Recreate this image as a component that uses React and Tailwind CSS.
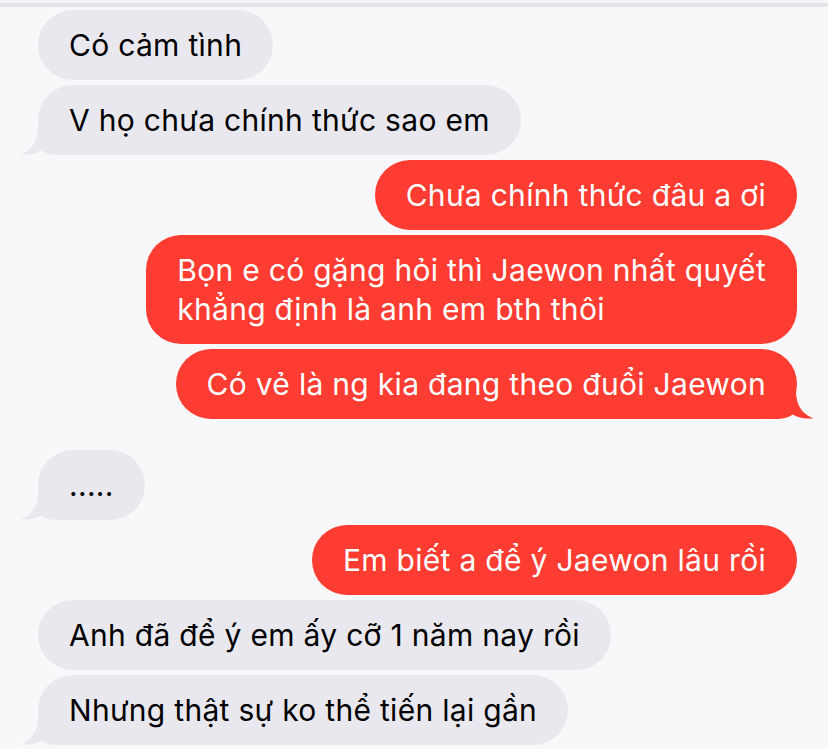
const messages = [
  { id: 1, from: "them", text: "Có cảm tình" },
  { id: 2, from: "them", text: "V họ chưa chính thức sao em", tail: true },
  { id: 3, from: "me", text: "Chưa chính thức đâu a ơi" },
  {
    id: 4,
    from: "me",
    lines: ["Bọn e có gặng hỏi thì Jaewon nhất quyết", "khẳng định là anh em bth thôi"],
  },
  { id: 5, from: "me", text: "Có vẻ là ng kia đang theo đuổi Jaewon", tail: true, gapAfter: true },
  { id: 6, from: "them", text: ".....", tail: true },
  { id: 7, from: "me", text: "Em biết a để ý Jaewon lâu rồi" },
  { id: 8, from: "them", text: "Anh đã để ý em ấy cỡ 1 năm nay rồi" },
  { id: 9, from: "them", text: "Nhưng thật sự ko thể tiến lại gần", tail: true },
];

function Tail({ mine }) {
  return (
    <svg
      width="50"
      height="36"
      viewBox="0 0 50 36"
      className={
        mine
          ? "absolute bottom-0 -right-[17px] -scale-x-100"
          : "absolute bottom-0 -left-[18px]"
      }
    >
      <path
        d="M18 0 L50 0 L50 36 L36 36 C29 35.5 25 34 21.5 31.5 C15 35 8 36 0.5 35.5 C12 31 18 22 18 8 Z"
        fill={mine ? "#fe3c31" : "#e9e8ee"}
      />
    </svg>
  );
}

function Bubble({ msg }) {
  const mine = msg.from === "me";
  return (
    <div className={`flex ${mine ? "justify-end pr-[31px]" : "justify-start pl-[38px]"} ${msg.gapAfter ? "mb-[26px]" : ""}`}>
      <div
        className={`relative rounded-[35px] px-[31px] py-[15.5px] text-[30px] leading-[39px] tracking-[0.3px] ${
          mine ? "bg-[#fe3c31] text-white" : "bg-[#e9e8ee] text-black"
        }`}
      >
        {msg.tail ? <Tail mine={mine} /> : null}
        <span className="relative whitespace-nowrap">
          {msg.lines
            ? msg.lines.map((line, i) => (
                <span key={i} className="block">
                  {line}
                </span>
              ))
            : msg.text}
        </span>
      </div>
    </div>
  );
}

export default function App() {
  return (
    <div
      className="h-[749px] w-[828px] overflow-hidden bg-[#f8f8fa]"
      style={{ fontFamily: "Inter, 'Noto Sans', sans-serif" }}
    >
      <div className="h-[3px] bg-[#f4f4f6]" />
      <div className="h-[4px] bg-[#e4e3ea]" />
      <div className="flex flex-col gap-[5px] pt-[3px]">
        {messages.map((msg) => (
          <Bubble key={msg.id} msg={msg} />
        ))}
      </div>
    </div>
  );
}
